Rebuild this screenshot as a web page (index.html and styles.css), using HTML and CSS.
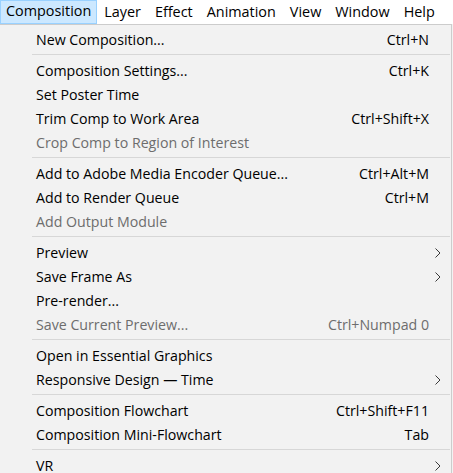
FILE: index.html
```html
<!DOCTYPE html>
<html>
<head>
<meta charset="utf-8">
<link rel="stylesheet" href="styles.css">
</head>
<body>
<div class="menubar">
  <div class="mb-item active">Composition</div>
  <div class="mb-item">Layer</div>
  <div class="mb-item">Effect</div>
  <div class="mb-item">Animation</div>
  <div class="mb-item">View</div>
  <div class="mb-item">Window</div>
  <div class="mb-item">Help</div>
</div>
<div class="dropdown">
  <div class="row"><span class="label">New Composition...</span><span class="key">Ctrl+N</span><span class="arrow"></span></div>
  <div class="sep"></div>
  <div class="row"><span class="label">Composition Settings...</span><span class="key">Ctrl+K</span><span class="arrow"></span></div>
  <div class="row"><span class="label">Set Poster Time</span><span class="key"></span><span class="arrow"></span></div>
  <div class="row"><span class="label">Trim Comp to Work Area</span><span class="key">Ctrl+Shift+X</span><span class="arrow"></span></div>
  <div class="row disabled"><span class="label">Crop Comp to Region of Interest</span><span class="key"></span><span class="arrow"></span></div>
  <div class="sep"></div>
  <div class="row"><span class="label">Add to Adobe Media Encoder Queue...</span><span class="key">Ctrl+Alt+M</span><span class="arrow"></span></div>
  <div class="row"><span class="label">Add to Render Queue</span><span class="key">Ctrl+M</span><span class="arrow"></span></div>
  <div class="row disabled"><span class="label">Add Output Module</span><span class="key"></span><span class="arrow"></span></div>
  <div class="sep"></div>
  <div class="row"><span class="label">Preview</span><span class="key"></span><span class="arrow"><svg width="6" height="10" viewBox="0 0 6 10"><path d="M0.5 0.5 L5 5 L0.5 9.5" fill="none" stroke="#3a3a3a" stroke-width="1"/></svg></span></div>
  <div class="row"><span class="label">Save Frame As</span><span class="key"></span><span class="arrow"><svg width="6" height="10" viewBox="0 0 6 10"><path d="M0.5 0.5 L5 5 L0.5 9.5" fill="none" stroke="#3a3a3a" stroke-width="1"/></svg></span></div>
  <div class="row"><span class="label">Pre-render...</span><span class="key"></span><span class="arrow"></span></div>
  <div class="row disabled"><span class="label">Save Current Preview...</span><span class="key">Ctrl+Numpad 0</span><span class="arrow"></span></div>
  <div class="sep"></div>
  <div class="row"><span class="label">Open in Essential Graphics</span><span class="key"></span><span class="arrow"></span></div>
  <div class="row"><span class="label">Responsive Design — Time</span><span class="key"></span><span class="arrow"><svg width="6" height="10" viewBox="0 0 6 10"><path d="M0.5 0.5 L5 5 L0.5 9.5" fill="none" stroke="#3a3a3a" stroke-width="1"/></svg></span></div>
  <div class="sep"></div>
  <div class="row"><span class="label">Composition Flowchart</span><span class="key">Ctrl+Shift+F11</span><span class="arrow"></span></div>
  <div class="row"><span class="label">Composition Mini-Flowchart</span><span class="key">Tab</span><span class="arrow"></span></div>
  <div class="sep"></div>
  <div class="row"><span class="label">VR</span><span class="key"></span><span class="arrow"><svg width="6" height="10" viewBox="0 0 6 10"><path d="M0.5 0.5 L5 5 L0.5 9.5" fill="none" stroke="#3a3a3a" stroke-width="1"/></svg></span></div>
</div>
</body>
</html>
```
FILE: styles.css
```css
html, body {
  margin: 0;
  padding: 0;
  background: #f2f2f2;
  overflow: hidden;
}
body {
  width: 453px;
  height: 473px;
  font-family: "Open Sans", "Noto Sans", sans-serif;
  color: #000;
}
.menubar {
  display: flex;
  height: 24px;
  background: #fff;
  font-size: 14.4px;
}
.mb-item {
  display: flex;
  align-items: center;
  padding: 0 6px 3px;
  border: 1px solid transparent;
  border-bottom: none;
}
.mb-item.active {
  background: #cce8ff;
  border-color: #99d1ff;
  border-bottom: 1px solid #99d1ff;
  height: 19px;
  padding: 0 5px 3px;
}
.dropdown {
  width: 451px;
  border-top: 1px solid #cccccc;
  border-right: 1px solid #cccccc;
  background: #f2f2f2;
  padding-top: 3px;
  font-size: 14.2px;
}
.row {
  display: grid;
  grid-template-columns: 1fr auto 22px;
  align-items: center;
  height: 23px;
  padding-left: 36px;
  padding-bottom: 1px;
}
.row.disabled {
  color: #6d6d6d;
}
.key {
  text-align: right;
}
.arrow {
  display: flex;
  align-items: center;
  justify-content: center;
  padding-right: 4px;
  padding-top: 1px;
}
.arrow svg {
  display: block;
}
.sep {
  height: 1px;
  background: #d7d7d7;
  margin: 2px 1px 4px 32px;
}
```
